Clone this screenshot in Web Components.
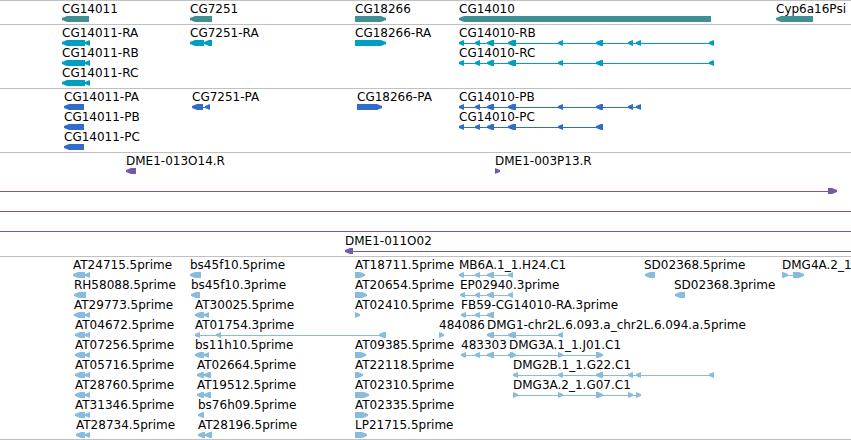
<!DOCTYPE html>
<html lang="en">
<head>
<meta charset="utf-8">
<title>Genome region</title>
<style>
  body { margin: 0; background: #fff; color: #000; font: 12px/14px "DejaVu Sans", sans-serif; }
</style>
</head>
<body>
<genome-browser></genome-browser>

<template id="browser-template">
  <style>
    :host { display: block; overflow: hidden; border-bottom: 1px solid #c0c0c0; }
    main { display: flex; flex-direction: column; }
  </style>
  <main></main>
</template>

<template id="track-template">
  <style>
    :host { display: flex; flex-direction: column; padding: 1px 0 2px; border-top: 1px solid #c0c0c0; }
    :host(:last-child) { padding-bottom: 1px; }
  </style>
  <slot></slot>
</template>

<template id="row-template">
  <style>
    :host { display: block; position: relative; height: 20px; }
  </style>
  <slot></slot>
</template>

<template id="feature-template">
  <style>
    /* Features sit at their coordinate on the sequence axis. */
    :host { display: flex; flex-direction: column; position: absolute; top: 0; left: var(--start); white-space: nowrap; }
    :host([open-end]) { right: 0; }
    .label { height: 14px; }
    svg { display: block; height: 6px; width: 100%; overflow: visible; fill: var(--track-color); }
  </style>
  <span class="label"><slot></slot></span>
  <svg aria-hidden="true"></svg>
</template>

<script>
const SVG = 'http://www.w3.org/2000/svg';
const stamp = (host, id) => {
  host.attachShadow({ mode: 'open' }).append(document.getElementById(id).content.cloneNode(true));
  return host.shadowRoot;
};

// Exons are [start, end] pairs on the axis; an end of Infinity runs off the view.
class GenomeFeature extends HTMLElement {
  set data([label, start, strand, exons, lineFrom = null, lineTo = null]) {
    const root = this.shadowRoot || stamp(this, 'feature-template');
    this.style.setProperty('--start', start + 'px');
    this.textContent = label;
    const svg = root.querySelector('svg');
    const add = (name, attrs) => {
      const node = document.createElementNS(SVG, name);
      for (const k in attrs) node.setAttribute(k, attrs[k]);
      svg.append(node);
    };
    const from = lineFrom ?? (exons.length ? exons[0][0] : start);
    const to = lineTo ?? (exons.length ? exons[exons.length - 1][1] : start);
    if (to === Infinity) this.toggleAttribute('open-end', true);
    add('rect', { x: from - start, y: 3, width: to === Infinity ? '100%' : to - from, height: 1 });
    for (const [a, b] of exons) {
      const l = a - start, r = b - start;
      const tip = Math.min(5, r - l);
      add('polygon', {
        points: strand === '<'
          ? `${l},2 ${l + tip},0 ${r},0 ${r},6 ${l + tip},6 ${l},4`
          : `${r},2 ${r - tip},0 ${l},0 ${l},6 ${r - tip},6 ${r},4`
      });
    }
  }
}

class GenomeRow extends HTMLElement {
  connectedCallback() { if (!this.shadowRoot) stamp(this, 'row-template'); }
}
class GenomeTrack extends HTMLElement {
  connectedCallback() { if (!this.shadowRoot) stamp(this, 'track-template'); }
}

const RB = [[459,464],[475,480],[487,494],[508,516],[558,563],[596,603],[628,633],[636,641],[709,714]];
const RC = RB.filter(([a]) => a !== 628 && a !== 636);
const TRACKS = [
  { color: '#3f8f95', rows: [[
    ['CG14011', 62, '<', [[62,89]]],
    ['CG7251', 190, '<', [[190,212]]],
    ['CG18266', 355, '>', [[355,386]]],
    ['CG14010', 459, '<', [[459,711]]],
    ['Cyp6a16Psi', 776, '<', [[776,813]]]
  ]] },
  { color: '#009fc0', rows: [[
    ['CG14011-RA', 62, '<', [[62,85],[85,90]]],
    ['CG7251-RA', 190, '<', [[190,204],[204,212]]],
    ['CG18266-RA', 355, '>', [[355,386]]],
    ['CG14010-RB', 459, '<', RB]
  ], [
    ['CG14011-RB', 62, '<', [[62,85],[85,90]]],
    ['CG14010-RC', 459, '<', RC]
  ], [
    ['CG14011-RC', 62, '<', [[62,85],[85,90]]]
  ]] },
  { color: '#326ccb', rows: [[
    ['CG14011-PA', 64, '<', [[64,84]]],
    ['CG7251-PA', 192, '<', [[192,203],[205,210]]],
    ['CG18266-PA', 357, '>', [[357,382]]],
    ['CG14010-PB', 459, '<', RB.slice(0, 8)]
  ], [
    ['CG14011-PB', 64, '<', [[64,84]]],
    ['CG14010-PC', 459, '<', RB.slice(0, 6)]
  ], [
    ['CG14011-PC', 64, '<', [[64,84]]]
  ]] },
  { color: '#7559a6', rows: [[
    ['DME1-013O14.R', 126, '<', [[126,136]]],
    ['DME1-003P13.R', 495, '>', [[495,500]]]
  ], [
    ['', 0, '>', [[828,837]], 0, 837]
  ], [
    ['', 0, '>', [], 0, Infinity]
  ], [
    ['', 0, '>', [], 0, Infinity]
  ], [
    ['DME1-011O02', 345, '<', [[345,353]], 345, Infinity]
  ]] },
  { color: '#87bcde', rows: [[
    ['AT24715.5prime', 73, '<', [[73,85],[85,90]]],
    ['bs45f10.5prime', 190, '<', [[190,201]]],
    ['AT18711.5prime', 355, '>', [[355,365]]],
    ['MB6A.1_1.H24.C1', 459, '<', [[459,464],[475,480],[487,494],[508,513]]],
    ['SD02368.5prime', 644, '<', [[645,655]]],
    ['DMG4A.2_1', 782, '>', [[782,788],[793,804]]]
  ], [
    ['RH58088.5prime', 74, '<', [[74,86]]],
    ['bs45f10.3prime', 191, '<', [[191,200]]],
    ['AT20654.5prime', 355, '>', [[355,367]]],
    ['EP02940.3prime', 460, '<', [[460,465],[475,480],[487,494],[508,513]]],
    ['SD02368.3prime', 674, '<', [[675,685]]]
  ], [
    ['AT29773.5prime', 74, '<', [[74,85],[85,90]]],
    ['AT30025.5prime', 195, '<', [[195,204],[204,209]]],
    ['AT02410.5prime', 355, '>', [[355,360]]],
    ['FB59-CG14010-RA.3prime', 461, '<', [[461,466],[475,480],[487,494]]]
  ], [
    ['AT04672.5prime', 75, '<', [[75,85],[85,90]]],
    ['AT01754.3prime', 195, '<', [[195,200],[216,221],[379,386]]],
    ['484086', 439, '>', [[439,444]]],
    ['DMG1-chr2L.6.093.a_chr2L.6.094.a.5prime', 487, '<', [[487,494],[508,516],[558,563]]]
  ], [
    ['AT07256.5prime', 75, '<', [[75,85],[85,90]]],
    ['bs11h10.5prime', 195, '<', [[195,204],[204,209]]],
    ['AT09385.5prime', 355, '>', [[355,366]]],
    ['483303', 461, '<', [[461,466],[475,480],[487,494],[508,513]]],
    ['DMG3A.1_1.J01.C1', 509, '>', [[510,516],[558,563],[596,603]]]
  ], [
    ['AT05716.5prime', 75, '<', [[75,85],[85,90]]],
    ['AT02664.5prime', 197, '<', [[197,204],[204,211]]],
    ['AT22118.5prime', 355, '>', [[355,363]]],
    ['DMG2B.1_1.G22.C1', 513, '<', [[513,518],[558,563],[596,603],[628,633],[636,641],[709,714]]]
  ], [
    ['AT28760.5prime', 75, '<', [[75,85],[85,90]]],
    ['AT19512.5prime', 197, '<', [[197,204],[204,211]]],
    ['AT02310.5prime', 355, '>', [[355,369]]],
    ['DMG3A.2_1.G07.C1', 513, '>', [[513,518],[558,563],[596,603],[628,633],[636,641]]]
  ], [
    ['AT31346.5prime', 75, '<', [[75,85],[85,90]]],
    ['bs76h09.5prime', 198, '<', [[198,204]]],
    ['AT02335.5prime', 355, '>', [[355,368]]]
  ], [
    ['AT28734.5prime', 76, '<', [[76,85],[85,90]]],
    ['AT28196.5prime', 198, '<', [[198,205],[205,212]]],
    ['LP21715.5prime', 355, '>', [[355,367]]]
  ]] }
];

class GenomeBrowser extends HTMLElement {
  connectedCallback() {
    if (this.shadowRoot) return;
    const main = stamp(this, 'browser-template').querySelector('main');
    for (const { color, rows } of TRACKS) {
      const track = document.createElement('genome-track');
      track.style.setProperty('--track-color', color);
      for (const features of rows) {
        const row = document.createElement('genome-row');
        for (const data of features) {
          const feature = document.createElement('genome-feature');
          feature.data = data;
          row.append(feature);
        }
        track.append(row);
      }
      main.append(track);
    }
  }
}

customElements.define('genome-feature', GenomeFeature);
customElements.define('genome-row', GenomeRow);
customElements.define('genome-track', GenomeTrack);
customElements.define('genome-browser', GenomeBrowser);
</script>
</body>
</html>
